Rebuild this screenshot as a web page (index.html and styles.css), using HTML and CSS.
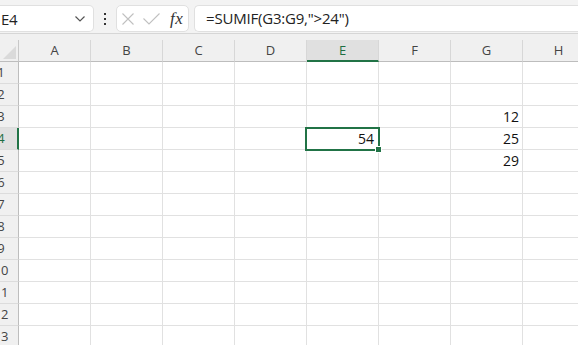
FILE: index.html
```html
<!DOCTYPE html>
<html>
<head>
<meta charset="utf-8">
<link rel="stylesheet" href="styles.css">
</head>
<body>
<div class="app">
  <div class="toolbar">
    <div class="namebox">
      <span class="name">E4</span>
      <svg class="chev" width="12" height="8" viewBox="0 0 12 8"><path d="M1.5 1.5 L6 6 L10.5 1.5" fill="none" stroke="#555" stroke-width="1.2"/></svg>
    </div>
    <div class="vdots"><i></i><i></i><i></i></div>
    <div class="fxbox">
      <svg class="icon" width="12" height="12" viewBox="0 0 12 12"><path d="M0.5 0.5 L11.5 11.5 M11.5 0.5 L0.5 11.5" stroke="#c0c0c0" stroke-width="1.1" fill="none"/></svg>
      <svg class="icon" width="17" height="12" viewBox="0 0 17 12"><path d="M0.5 5.5 L6 11 L16.5 0.5" stroke="#c0c0c0" stroke-width="1.1" fill="none"/></svg>
      <span class="fx">fx</span>
    </div>
    <div class="formula">=SUMIF(G3:G9,"&gt;24")</div>
  </div>
  <div class="band"></div>
  <div class="sheet">
    <div class="corner"><svg width="14" height="14" viewBox="0 0 14 14"><path d="M14 1 L14 14 L1 14 Z" fill="#dadada"/></svg></div>
    <div class="ch">A</div><div class="ch">B</div><div class="ch">C</div><div class="ch">D</div><div class="ch sel">E</div><div class="ch">F</div><div class="ch">G</div><div class="ch">H</div>

    <div class="rh"><span>1</span></div><div class="c"></div><div class="c"></div><div class="c"></div><div class="c"></div><div class="c"></div><div class="c"></div><div class="c"></div><div class="c"></div>
    <div class="rh"><span>2</span></div><div class="c"></div><div class="c"></div><div class="c"></div><div class="c"></div><div class="c"></div><div class="c"></div><div class="c"></div><div class="c"></div>
    <div class="rh"><span>3</span></div><div class="c"></div><div class="c"></div><div class="c"></div><div class="c"></div><div class="c"></div><div class="c"></div><div class="c num">12</div><div class="c"></div>
    <div class="rh sel"><span>4</span></div><div class="c"></div><div class="c"></div><div class="c"></div><div class="c"></div><div class="c num active">54<b class="handle"></b></div><div class="c"></div><div class="c num">25</div><div class="c"></div>
    <div class="rh"><span>5</span></div><div class="c"></div><div class="c"></div><div class="c"></div><div class="c"></div><div class="c"></div><div class="c"></div><div class="c num">29</div><div class="c"></div>
    <div class="rh"><span>6</span></div><div class="c"></div><div class="c"></div><div class="c"></div><div class="c"></div><div class="c"></div><div class="c"></div><div class="c"></div><div class="c"></div>
    <div class="rh"><span>7</span></div><div class="c"></div><div class="c"></div><div class="c"></div><div class="c"></div><div class="c"></div><div class="c"></div><div class="c"></div><div class="c"></div>
    <div class="rh"><span>8</span></div><div class="c"></div><div class="c"></div><div class="c"></div><div class="c"></div><div class="c"></div><div class="c"></div><div class="c"></div><div class="c"></div>
    <div class="rh"><span>9</span></div><div class="c"></div><div class="c"></div><div class="c"></div><div class="c"></div><div class="c"></div><div class="c"></div><div class="c"></div><div class="c"></div>
    <div class="rh"><span>10</span></div><div class="c"></div><div class="c"></div><div class="c"></div><div class="c"></div><div class="c"></div><div class="c"></div><div class="c"></div><div class="c"></div>
    <div class="rh"><span>11</span></div><div class="c"></div><div class="c"></div><div class="c"></div><div class="c"></div><div class="c"></div><div class="c"></div><div class="c"></div><div class="c"></div>
    <div class="rh"><span>12</span></div><div class="c"></div><div class="c"></div><div class="c"></div><div class="c"></div><div class="c"></div><div class="c"></div><div class="c"></div><div class="c"></div>
    <div class="rh"><span>13</span></div><div class="c"></div><div class="c"></div><div class="c"></div><div class="c"></div><div class="c"></div><div class="c"></div><div class="c"></div><div class="c"></div>
  </div>
</div>
</body>
</html>
```

FILE: styles.css
```css
html, body {
  margin: 0;
  padding: 0;
  background: #ffffff;
  overflow: hidden;
}
.app {
  width: 578px;
  height: 345px;
  overflow: hidden;
  font-family: "Open Sans", "Noto Sans", sans-serif;
}
.toolbar {
  background: #f3f3f3;
  border-bottom: 1px solid #d6d6d6;
  display: flex;
  align-items: flex-start;
  padding-top: 5px;
  box-sizing: border-box;
  height: 34px;
}
.namebox {
  width: 94px;
  height: 27px;
  box-sizing: border-box;
  background: #fff;
  border: 1px solid #e0e0e0;
  border-left: none;
  border-radius: 0 5px 5px 0;
  display: flex;
  align-items: center;
  justify-content: space-between;
  padding: 0 7px 0 1px;
}
.name {
  font-size: 15px;
  color: #222;
  letter-spacing: -0.3px;
}
.chev { margin-top: 1px; }
.vdots {
  width: 22px;
  height: 27px;
  display: flex;
  flex-direction: column;
  align-items: center;
  justify-content: center;
  gap: 3px;
}
.vdots i {
  display: block;
  width: 2px;
  height: 2px;
  background: #333;
}
.fxbox {
  width: 73px;
  height: 27px;
  box-sizing: border-box;
  background: #fff;
  border: 1px solid #e0e0e0;
  border-radius: 5px;
  display: flex;
  align-items: center;
  padding: 0 4px 0 5px;
  gap: 9px;
}
.fx {
  font-family: "Liberation Serif", "DejaVu Serif", serif;
  font-style: italic;
  font-size: 17px;
  color: #333;
  margin-left: 1px;
  letter-spacing: 0.5px;
}
.formula {
  flex: 1;
  margin-left: 5px;
  height: 27px;
  box-sizing: border-box;
  background: #fff;
  border: 1px solid #e0e0e0;
  border-right: none;
  border-radius: 5px 0 0 5px;
  font-size: 15px;
  color: #222;
  padding-left: 11px;
  line-height: 24px;
  letter-spacing: -0.2px;
}
.band {
  height: 6px;
  background: #f0f0f0;
}
.sheet {
  display: grid;
  grid-template-columns: 19px repeat(8, 72px);
  grid-auto-rows: 22px;
  position: relative;
}
.corner {
  background: #f0f0f0;
  border-right: 1px solid #c8c8c8;
  border-bottom: 1px solid #bdbdbd;
  display: flex;
  align-items: flex-end;
  justify-content: flex-end;
  padding: 0 2px 2px 0;
  box-sizing: border-box;
}
.ch {
  background: #f0f0f0;
  border-right: 1px solid #d7d7d7;
  border-bottom: 1px solid #bdbdbd;
  box-sizing: border-box;
  font-size: 13px;
  color: #444;
  text-align: center;
  line-height: 21px;
}
.ch.sel {
  background: #e0e0e0;
  color: #1f6e43;
  border-bottom: 2px solid #217346;
  line-height: 20px;
}
.rh {
  background: #f0f0f0;
  border-right: 1px solid #bdbdbd;
  border-bottom: 1px solid #dcdcdc;
  box-sizing: border-box;
  overflow: hidden;
  position: relative;
  font-size: 13px;
  color: #444;
  line-height: 21px;
}
.rh span {
  position: absolute;
  left: -17px;
  width: 36px;
  text-align: center;
}
.rh.sel {
  background: #e0e0e0;
  color: #1f6e43;
  border-right: 2px solid #217346;
}
.c {
  border-right: 1px solid #e1e1e1;
  border-bottom: 1px solid #e1e1e1;
  box-sizing: border-box;
}
.num {
  font-family: "Open Sans", "Noto Sans", sans-serif;
  font-size: 14px;
  color: #111;
  text-align: right;
  padding-right: 3px;
  line-height: 22px;
}
.active {
  position: relative;
  outline: 2px solid #217346;
  outline-offset: -1px;
  margin: 0 0 0 -1px;
  padding-right: 4px;
  z-index: 2;
}
.handle {
  position: absolute;
  right: -4px;
  bottom: -4px;
  width: 5px;
  height: 5px;
  background: #217346;
  border: 1px solid #fff;
}
```
